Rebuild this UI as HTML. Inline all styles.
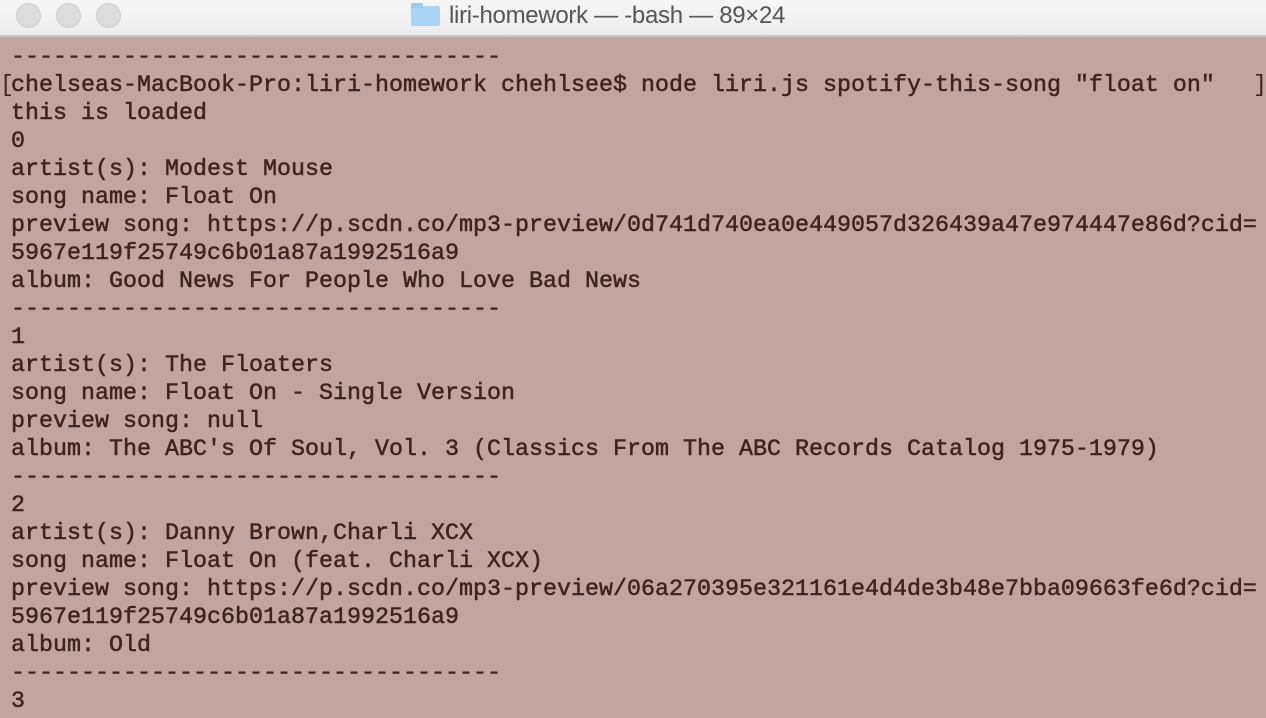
<!DOCTYPE html>
<html><head><style>
html,body{margin:0;padding:0;width:1266px;height:718px;overflow:hidden;background:#c2a4a0}
.bar{position:absolute;left:0;top:0;width:1266px;height:35px;background:linear-gradient(#f6f6f6,#ececec);border-bottom:2px solid #c9c9c9}
.dot{position:absolute;top:3px;width:23px;height:23px;border-radius:50%;background:#dcdcdc;border:1px solid #cfcfcf}
.title{position:absolute;left:449px;top:2px;font:24px "Liberation Sans",sans-serif;color:#555;letter-spacing:-0.3px}
.folder{position:absolute;left:411px;top:6px;width:29px;height:20px;background:#a9d4f5;border-radius:2px}
.folder:before{content:"";position:absolute;left:0;top:-3px;width:12px;height:5px;background:#9ccbef;border-radius:2px 2px 0 0}
pre{position:absolute;left:11px;top:44px;margin:0;font:23.33px/28px "Liberation Mono",monospace;color:#3f2420;-webkit-text-stroke:0.5px #3f2420}
.b{position:absolute;top:72px;font:23.33px/28px "Liberation Mono",monospace;color:#3f2420}
</style></head><body>
<div class="bar">
<div class="dot" style="left:16px"></div>
<div class="dot" style="left:56px"></div>
<div class="dot" style="left:96px"></div>
<div class="folder"></div>
<div class="title">liri-homework — -bash — 89×24</div>
</div>
<pre>-----------------------------------
chelseas-MacBook-Pro:liri-homework chehlsee$ node liri.js spotify-this-song "float on"
this is loaded
0
artist(s): Modest Mouse
song name: Float On
preview song: https://p.scdn.co/mp3-preview/0d741d740ea0e449057d326439a47e974447e86d?cid=
5967e119f25749c6b01a87a1992516a9
album: Good News For People Who Love Bad News
-----------------------------------
1
artist(s): The Floaters
song name: Float On - Single Version
preview song: null
album: The ABC's Of Soul, Vol. 3 (Classics From The ABC Records Catalog 1975-1979)
-----------------------------------
2
artist(s): Danny Brown,Charli XCX
song name: Float On (feat. Charli XCX)
preview song: https://p.scdn.co/mp3-preview/06a270395e321161e4d4de3b48e7bba09663fe6d?cid=
5967e119f25749c6b01a87a1992516a9
album: Old
-----------------------------------
3</pre>
<div class="b" style="left:0px">[</div>
<div class="b" style="left:1253px">]</div>
</body></html>
